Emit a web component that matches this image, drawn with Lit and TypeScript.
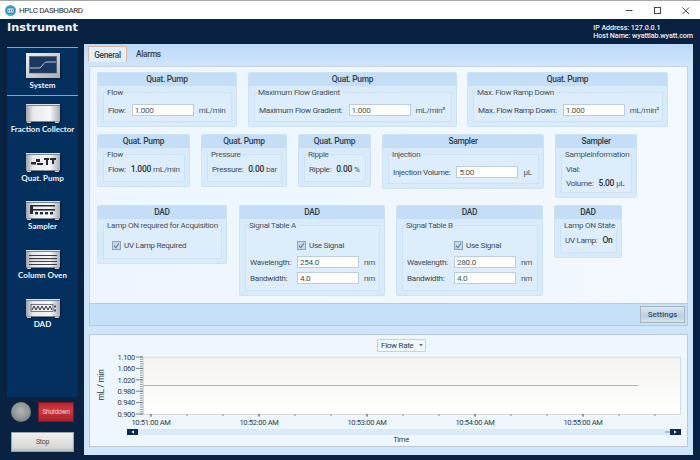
import { LitElement, html, css, svg } from "lit";
import { customElement } from "lit/decorators.js";

const deviceIcon = (id: string, glyph: unknown) => html`
  <svg class="dev" viewBox="0 0 34 19" width="34" height="19">
    <defs>
      <linearGradient id="g${id}" x1="0" y1="0" x2="1" y2="0">
        <stop offset="0" stop-color="#9ea3a8" /><stop offset=".2" stop-color="#e6e8ea" />
        <stop offset=".7" stop-color="#f7f8f8" /><stop offset="1" stop-color="#a9adb1" />
      </linearGradient>
    </defs>
    <rect x="0" y="0" width="34" height="17.5" fill="url(#g${id})" />
    <rect x="0" y="0" width="34" height="1" fill="#dfe3e6" />
    <rect x="0" y="1" width="34" height="1" fill="#7c848c" />
    <rect x="1" y="17.5" width="4" height="1.5" fill="#c9ccd0" />
    <rect x="29" y="17.5" width="4" height="1.5" fill="#c9ccd0" />
    ${glyph}
  </svg>`;

const pumpGlyph = svg`<g fill="#252a33">
  <rect x="5" y="9" width="5" height="2.5"/><rect x="10" y="6" width="4" height="3"/><rect x="11" y="10" width="6" height="2"/>
  <rect x="18" y="5" width="5" height="2"/><rect x="20" y="7" width="2" height="5"/><rect x="24" y="5" width="6" height="2"/><rect x="26" y="7" width="2" height="4"/>
</g>`;
const samplerGlyph = svg`<g fill="#252a33">
  <rect x="4" y="4" width="3" height="9"/><rect x="4" y="4" width="25" height="1.5"/><rect x="7" y="8" width="22" height="1.6"/>
  <rect x="9" y="11" width="3" height="2.4"/><rect x="14" y="11" width="3" height="2.4"/><rect x="19" y="11" width="3" height="2.4"/><rect x="24" y="11" width="3" height="2.4"/>
</g>`;
const ovenGlyph = svg`<g fill="#3a4049">
  <rect x="3" y="5" width="28" height="1"/><rect x="3" y="8" width="28" height="1.2"/><rect x="3" y="11" width="28" height="1"/><rect x="3" y="14" width="28" height="1"/>
</g>`;
const dadGlyph = svg`<g fill="none" stroke="#2a2f38">
  <rect x="5" y="5.5" width="22" height="7" stroke-width=".6"/>
  <path d="M6 11 8 7l2 4 2-4 2 4 2-4 2 4 2-4 2 4 2-4 2 4" stroke-width="1"/>
  <path d="M29 6.5v2M29 10.5v2" stroke-width="1.6"/>
</g>`;

const navItems = [
  { id: "f", label: "Fraction Collector", glyph: svg`` },
  { id: "q", label: "Quat. Pump", glyph: pumpGlyph },
  { id: "s", label: "Sampler", glyph: samplerGlyph },
  { id: "c", label: "Column Oven", glyph: ovenGlyph },
  { id: "d", label: "DAD", glyph: dadGlyph },
];

const yLabels = [
  ["1.100", 357], ["1.060", 368.4], ["1.020", 379.8], ["0.980", 391.2], ["0.940", 402.6], ["0.900", 414],
] as const;
const xLabels = [
  ["10:51:00 AM", 151], ["10:52:00 AM", 259], ["10:53:00 AM", 367], ["10:54:00 AM", 475], ["10:55:00 AM", 583],
] as const;

@customElement("app-root")
export class AppRoot extends LitElement {
  static styles = css`
    :host { display: flex; flex-direction: column; width: 700px; height: 460px; overflow: hidden; background: #0a2242;
      font-family: Roboto, sans-serif; font-size: 8.1px; color: #3f4a54; letter-spacing: -.28px; }
    * { box-sizing: border-box; }
    .titlebar { height: 19px; flex: none; background: #fff; border-top: 1px solid #a8a8a8; display: flex; align-items: center;
      padding-left: 5px; font-size: 8px; color: #2b2b2b; gap: 3px; letter-spacing: -.35px; }
    .app-ico { width: 11px; height: 11px; flex: none; }
    .win { margin-left: auto; display: flex; }
    .win svg { display: block; }
    .head { height: 25px; flex: none; display: flex; justify-content: space-between; padding: 2px 7px 0 7px; }
    .brand { font-family: "DejaVu Sans", sans-serif; font-weight: 700; font-size: 11.3px; color: #f2f5f8; line-height: 13px; letter-spacing: 0; }
    .host { color: #eef2f6; font-size: 7.2px; font-weight: 500; line-height: 8.2px; padding-top: 3px; white-space: nowrap; letter-spacing: -.1px; }
    .main { flex: 1; display: flex; min-height: 0; padding: 0 7px 5px 7px; }
    .side-wrap { width: 71px; flex: none; margin-top: 3px; margin-right: 6px; display: flex; flex-direction: column; }
    .side { height: 350px; flex: none; background: #03305f; color: #f2f6fa; }
    .sel { height: 49px; border-top: 1px solid #8ea4bb; border-bottom: 1px solid #8ea4bb; display: flex; flex-direction: column; align-items: center; padding-top: 5px; }
    .nav { display: flex; flex-direction: column; align-items: center; height: 48.7px; padding-top: 8px; }
    .lbl { font-family: Lato, sans-serif; font-weight: 700; font-size: 8px; line-height: 10px; margin-top: 1px; white-space: nowrap; color: #eef3f8; letter-spacing: 0; }
    .sel .lbl { margin-top: 2px; }
    .dev { display: block; filter: drop-shadow(1px 1px 1px #0a1a30); }
    .ctrl { display: flex; align-items: center; padding: 5px 4px 0 4px; gap: 7px; }
    .led { width: 20px; height: 20px; border-radius: 50%; flex: none; background: radial-gradient(circle at 50% 45%, #b4b6b6 0, #8f9392 55%, #585c5e 100%); }
    .shut { width: 36px; height: 20px; background: linear-gradient(#b4242c, #d03a42 40%, #a81f27); border: 1px solid #7c1a22; color: #f0c8c8; font-size: 6.6px; display: flex; align-items: center; justify-content: center; }
    .stop { margin: 10px 4px 0 4px; height: 20px; background: linear-gradient(#f0f0ef, #d6d7d6 80%, #bdbebd); border: 1px solid #9da2a5; color: #4b4f53; font-size: 7px; display: flex; align-items: center; justify-content: center; }

    .panel { width: 609px; flex: none; background: #cfe5fb; display: flex; flex-direction: column; padding: 0 5px 8px 5px; }
    .tabs { height: 22px; flex: none; display: flex; align-items: flex-start; background: linear-gradient(#bcd9fb, #cfe5fb); margin: 0 -5px; padding: 2px 0 0 4px; }
    .tab { height: 16px; padding: 0 5px; display: flex; align-items: center; font-size: 8.3px; font-weight: 500; color: #33404c; }
    .tab.on { width: 39px; justify-content: center; background: #e4effc; border: 1px solid #d8b79c; border-bottom: 0; }
    .tab.off { margin-left: 4px; }
    .content { height: 237px; flex: none; background: linear-gradient(90deg, #edf6fe, #f3f9ff); border: 1px solid #c9d3dc; border-bottom: 0; padding: 5px 0 0 7px; display: flex; flex-direction: column; gap: 7px; width: 599px; }
    .row { display: flex; align-items: flex-start; }
    .card { background: #d9ebfb; border: 1px solid #cee2f3; border-radius: 2px; flex: none; }
    .card-h { height: 13px; background: #c3def6; text-align: center; font-weight: 500; font-size: 8.4px; line-height: 13px; color: #303c46; }
    fieldset { margin: 1px 4px 4px 5px; padding: 2px 3px 4px 3px; border: 1px solid #cde2f5; background: #ddedfb; min-width: 0; display: flex; flex-direction: column; }
    legend { padding: 0 2px 0 0; font-size: 8.1px; line-height: 10px; color: #47525c; white-space: nowrap; }
    .f { display: flex; align-items: center; height: 16px; white-space: nowrap; padding-left: 1px; }
    .f.top { height: 15px; margin-top: 3px; }
    .f.vol { height: 11px; }
    .n { flex: none; }
    .n.dl { width: 41px; }
    .inp { height: 12px; width: 62px; flex: none; background: #fff; border: 1px solid #bcced9; color: #4a545c; padding-left: 2px; line-height: 10px; font-size: 8.1px; margin: 0 5px 0 6px; }
    .u { color: #4a555f; }
    .v { font-weight: 500; font-size: 8.5px; color: #26303a; margin: 0 2px 0 5px; }
    .chk { width: 9px; height: 9px; flex: none; display: block; }
    .c-140 { width: 140px; } .c-209 { width: 209px; margin-left: 11px; } .c-201 { width: 201px; margin-left: 10px; }
    .c-93 { width: 93px; } .c-86 { width: 86px; margin-left: 11px; } .c-73 { width: 73px; margin-left: 11px; }
    .c-162 { width: 162px; margin-left: 11px; } .c-82 { width: 82px; margin-left: 11px; }
    .c-130 { width: 130px; } .c-146 { width: 146px; margin-left: 12px; } .c-147 { width: 147px; margin-left: 11px; } .c-68 { width: 68px; margin-left: 11px; }
    .lamp { height: 18px; margin-top: 4px; padding-left: 5px; gap: 3px; }
    .use { gap: 3px; height: 18px; margin-top: 4px; padding-left: 48px; }
    .settings-bar { height: 23px; flex: none; background: #c6e0f7; width: 599px; border: 1px solid #bcc9d4; display: flex; justify-content: flex-end; align-items: center; padding-right: 2px; }
    .btn-set { width: 45px; height: 17px; border: 1px solid #aab4bd; background: linear-gradient(#d9e8f4, #b9cfe2 60%, #d5e4f0); color: #3a5268; font-size: 8px; font-weight: 500; display: flex; align-items: center; justify-content: center; letter-spacing: 0; }
    .chart { margin-top: 8px; height: 113px; flex: none; width: 599px; background: #eef6fe; border: 1px solid #bcc9d4; }
    .chart svg { display: block; }
    text { font-family: Roboto, sans-serif; }
    .ax { font-size: 7.5px; fill: #333b42; }
    .sel-t { font-size: 8px; }
    .ax-y { font-size: 8.4px; }
  `;

  private check() {
    return html`<svg class="chk" viewBox="0 0 9 9">
      <rect x=".5" y=".5" width="8" height="8" fill="#c4d8ea" stroke="#8ea4b8" />
      <path d="M2 4.6 3.8 6.6 7 2.2" fill="none" stroke="#5f7fa0" stroke-width="1.1" />
    </svg>`;
  }

  private card(cls: string, title: string, legend: string, body: unknown) {
    return html`<div class="card ${cls}"><div class="card-h">${title}</div>
      <fieldset><legend>${legend}</legend>${body}</fieldset></div>`;
  }

  private inputRow(label: string, value: string, unit: string) {
    return html`<div class="f top"><span class="n">${label}</span><div class="inp">${value}</div><span class="u">${unit}</span></div>`;
  }

  private readRow(label: string, value: string, unit: string, cls = "") {
    return html`<div class="f ${cls}"><span class="n">${label}</span><span class="v">${value}</span><span class="u">${unit}</span></div>`;
  }

  private dadBody(wave: string) {
    return html`
      <div class="f use">${this.check()}<span>Use Signal</span></div>
      <div class="f"><span class="n dl">Wavelength:</span><div class="inp">${wave}</div><span class="u">nm</span></div>
      <div class="f"><span class="n dl">Bandwidth:</span><div class="inp">4.0</div><span class="u">nm</span></div>`;
  }

  private chart() {
    const minor: unknown[] = [];
    for (let y = 357; y <= 414.1; y += 2.28) minor.push(svg`<line x1="140" x2="143" y1=${y} y2=${y} stroke="#5c6064" stroke-width=".6" />`);
    const xt: unknown[] = [];
    for (let x = 151; x < 660; x += 36) xt.push(svg`<line x1=${x} x2=${x} y1="414" y2="416" stroke="#5c6064" stroke-width=".7" />`);
    return svg`<svg width="597" height="111" viewBox="90 335 597 111">
      <defs><linearGradient id="plot" x1="0" y1="0" x2="0" y2="1"><stop offset="0" stop-color="#f5f4f2"/><stop offset="1" stop-color="#ffffff"/></linearGradient></defs>
      <rect x="143.5" y="357.5" width="537" height="57" fill="url(#plot)" stroke="#d8dcdf" />
      <rect x="377.5" y="339.5" width="48" height="12" fill="#f2f7fc" stroke="#c8d2da" />
      <text x="381" y="348.3" class="ax sel-t">Flow Rate</text>
      <path d="M419 344h4l-2 2.4z" fill="#6a7278" />
      <line x1="143" x2="638.5" y1="385.5" y2="385.5" stroke="#8fbcd6" stroke-width="1" />
      ${yLabels.map(([t, y]) => svg`<text x="135" y=${y + 2.8} text-anchor="end" class="ax">${t}</text><line x1="136" x2="143" y1=${y} y2=${y} stroke="#4c5054" stroke-width=".7" />`)}
      ${minor}${xt}
      ${xLabels.map(([t, x]) => svg`<text x=${x} y="425" text-anchor="middle" class="ax">${t}</text><line x1=${x} x2=${x} y1="414" y2="417" stroke="#4c5054" stroke-width=".7" />`)}
      <text transform="translate(104 385) rotate(-90)" text-anchor="middle" class="ax ax-y">mL / min</text>
      <rect x="127" y="429" width="554" height="6" fill="#d9eafa" />
      <rect x="127" y="429" width="11" height="6" fill="#0c2a52" />
      <path d="M134 430.2v3.6l-2.6-1.8z" fill="#e8eef4" />
      <line x1="665" x2="670" y1="432" y2="432" stroke="#7d95ab" />
      <rect x="670" y="429" width="11" height="6" fill="#0c2a52" />
      <path d="M674 430.2v3.6l2.6-1.8z" fill="#e8eef4" />
      <text x="401" y="442" text-anchor="middle" class="ax">Time</text>
    </svg>`;
  }

  render() {
    return html`
      <div class="titlebar">
        <svg class="app-ico" viewBox="0 0 11 11"><circle cx="5.5" cy="5.5" r="5.5" fill="#3fa9d8" /><rect x="2" y="3" width="7" height="5" rx="1" fill="#cfeaf5" stroke="#23627f" stroke-width=".7" /><path d="M3.7 4.7v1.6M5.5 4.7v1.6M7.3 4.7v1.6" stroke="#23627f" stroke-width=".8" /></svg>
        <span>HPLC DASHBOARD</span>
        <div class="win">
          <svg width="76" height="18" viewBox="0 0 76 18" fill="none" stroke="#444">
            <line x1="2" x2="8.5" y1="9.5" y2="9.5" />
            <rect x="30.5" y="6.5" width="6" height="6" />
            <path d="M58.5 6.5l6.5 6.5M65 6.5l-6.5 6.5" />
          </svg>
        </div>
      </div>
      <div class="head">
        <div class="brand">Instrument</div>
        <div class="host">IP Address: 127.0.0.1<br />Host Name: wyattlab.wyatt.com</div>
      </div>
      <div class="main">
        <div class="side-wrap">
          <div class="side">
            <div class="sel">
              <svg class="dev" viewBox="0 0 34 25" width="34" height="25">
                <defs><linearGradient id="gsys" x1="0" y1="0" x2="1" y2="1"><stop offset="0" stop-color="#f2f3f4" /><stop offset="1" stop-color="#a8adb2" /></linearGradient></defs>
                <rect width="34" height="25" fill="url(#gsys)" />
                <rect x="3.5" y="3.5" width="27" height="16.5" fill="#1b3763" stroke="#4a5566" stroke-width=".6" />
                <path d="M4 15h9c3 0 4-6 8-6h9" fill="none" stroke="#d4d9df" stroke-width=".9" />
              </svg>
              <div class="lbl">System</div>
            </div>
            ${navItems.map((n) => html`<div class="nav">${deviceIcon(n.id, n.glyph)}<div class="lbl">${n.label}</div></div>`)}
          </div>
          <div class="ctrl"><div class="led"></div><div class="shut">Shutdown</div></div>
          <div class="stop">Stop</div>
        </div>
        <div class="panel">
          <div class="tabs"><div class="tab on">General</div><div class="tab off">Alarms</div></div>
          <div class="content">
            <div class="row">
              ${this.card("c-140", "Quat. Pump", "Flow", this.inputRow("Flow:", "1.000", "mL/min"))}
              ${this.card("c-209", "Quat. Pump", "Maximum Flow Gradient", this.inputRow("Maximum Flow Gradient:", "1.000", "mL/min²"))}
              ${this.card("c-201", "Quat. Pump", "Max. Flow Ramp Down", this.inputRow("Max. Flow Ramp Down:", "1.000", "mL/min²"))}
            </div>
            <div class="row">
              ${this.card("c-93", "Quat. Pump", "Flow", this.readRow("Flow:", "1.000", "mL/min"))}
              ${this.card("c-86", "Quat. Pump", "Pressure", this.readRow("Pressure:", "0.00", "bar"))}
              ${this.card("c-73", "Quat. Pump", "Ripple", this.readRow("Ripple:", "0.00", "%"))}
              ${this.card("c-162", "Sampler", "Injection", this.inputRow("Injection Volume:", "5.00", "µL"))}
              ${this.card("c-82", "Sampler", "SampleInformation", html`<div class="f">Vial:</div>${this.readRow("Volume:", "5.00", "µL", "vol")}`)}
            </div>
            <div class="row">
              ${this.card("c-130", "DAD", "Lamp ON required for Acquisition", html`<div class="f lamp">${this.check()}<span>UV Lamp Required</span></div>`)}
              ${this.card("c-146", "DAD", "Signal Table A", this.dadBody("254.0"))}
              ${this.card("c-147", "DAD", "Signal Table B", this.dadBody("280.0"))}
              ${this.card("c-68", "DAD", "Lamp ON State", this.readRow("UV Lamp:", "On", ""))}
            </div>
          </div>
          <div class="settings-bar"><div class="btn-set">Settings</div></div>
          <div class="chart">${this.chart()}</div>
        </div>
      </div>
    `;
  }
}
